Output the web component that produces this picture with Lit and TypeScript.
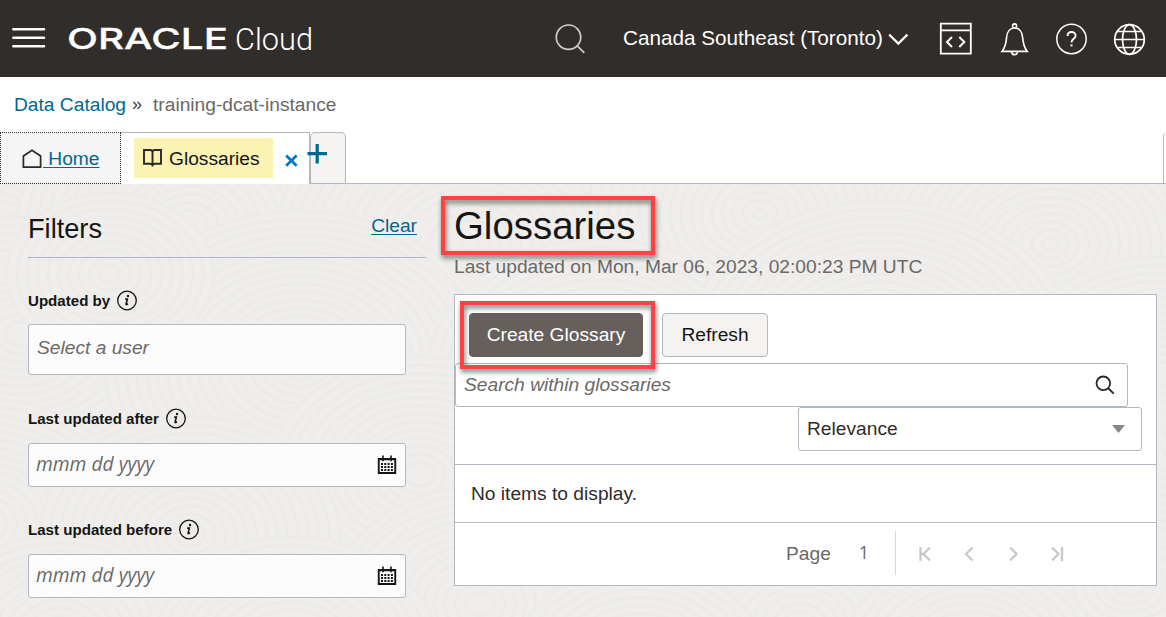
import { LitElement, html, svg, css } from "lit";
import { customElement, property } from "lit/decorators.js";

const SWIRLS: Array<[number, number, number]> = [
  [60, -70, 190], [330, -90, 200], [620, -110, 220], [900, -80, 200], [1180, -90, 210],
  [190, 40, 150], [470, 60, 170], [760, 30, 150], [1050, 60, 160],
  [20, 150, 130], [300, 180, 170], [600, 190, 150], [880, 170, 170], [1160, 190, 130],
  [110, 90, 90], [420, 290, 130], [700, 300, 150], [1010, 310, 160],
  [-20, 340, 140], [190, 350, 130], [480, 420, 130], [800, 440, 140], [1130, 400, 130],
  [60, 450, 110], [290, 470, 130], [640, 480, 110], [970, 470, 110],
];

@customElement("woven-backdrop")
export class WovenBackdrop extends LitElement {
  static styles = css`
    :host { display: block; overflow: hidden; min-width: 0; min-height: 0; }
    svg { display: block; }
  `;
  render() {
    return html`<svg width="1166" height="433" viewBox="0 0 1166 433" fill="none">
      <rect width="1166" height="433" fill="#efeeec"/>
      ${SWIRLS.map(([x, y, r]) => {
        const rings = [];
        for (let k = r; k > 5; k -= 9) rings.push(k);
        return svg`<g><ellipse cx=${x} cy=${y} rx=${r * 1.15} ry=${r * 0.9} fill="#efeeec"/>
          ${rings.map((k) => svg`<ellipse cx=${x} cy=${y} rx=${k * 1.15} ry=${k * 0.9} stroke="#ecebe9" stroke-width="3"/>`)}</g>`;
      })}
    </svg>`;
  }
}

@customElement("filter-field")
export class FilterField extends LitElement {
  @property() label = "";
  @property() placeholder = "";
  @property({ type: Boolean }) date = false;

  static styles = css`
    :host { display: block; }
    .label { display: flex; align-items: center; height: 21px; gap: 7px; font-size: 15.1px; font-weight: 700; color: #161513; }
    svg { display: block; flex: none; }
    .box { box-sizing: border-box; display: flex; justify-content: space-between; width: 378px; height: 51px;
      margin-top: 13px; padding: 0 8px; border: 1px solid #b1b8c2; border-radius: 3px; background: #fcfcfc;
      font-size: 19.2px; font-style: italic; color: #6b6966; line-height: 46px; }
    .date { height: 44px; margin-top: 14px; padding: 0 8px 0 7px; align-items: center; }
    .date span { font-family: "Open Sans", "Noto Sans", sans-serif; font-size: 19.3px; line-height: 40px; height: 42px; }
  `;
  render() {
    return html`
      <div class="label"><span>${this.label}</span>
        <svg width="21" height="21" viewBox="0 0 21 21" fill="none" stroke="#161513">
          <circle cx="10" cy="10.5" r="9.3" stroke-width="1.3"/>
          <path d="M8.200 9.100h2.200l-1.300 4.800q-.2 1 .6.700l1.300-.8" stroke-width="1.600"/>
          <circle cx="11" cy="6" r="1.200" fill="#161513" stroke="none"/>
        </svg>
      </div>
      <div class="box ${this.date ? "date" : ""}"><span>${this.placeholder}</span>
        ${this.date
          ? html`<svg width="20" height="20" viewBox="0 0 20 20" fill="#161513">
              <path fill-rule="evenodd" d="M.8 3h18.400v16H.8zM2.700 5.300v11.800h14.600V5.300z"/>
              <path d="M5.200 .6h1.600v5.600H5.200zM13.200 .6h1.600v5.600h-1.600z"/>
              <path d="M4 9h12.500M4 12h12.500M4 15h12.500" stroke="#161513" stroke-width="1.800" stroke-dasharray="2 1.300"/>
            </svg>`
          : ""}
      </div>`;
  }
}

@customElement("app-root")
export class AppRoot extends LitElement {
  static styles = css`
    :host { display: block; position: relative; width: 1166px; height: 617px; overflow: hidden; background: #fff;
      font-family: "Liberation Sans", Arial, sans-serif; font-size: 19.2px; color: #161513; white-space: nowrap; }
    svg { display: block; flex: none; }
    header { display: flex; align-items: center; box-sizing: border-box; height: 77px; padding: 0 0 1px 12px; background: #312d2a; color: #fff; }
    .logo { margin-left: 22px; }
    .hsearch { margin: 2px 0 0 241px; }
    .region { margin-left: 37px; width: 261px; font-size: 20.7px; }
    .chev { margin: 2px 0 0 4px; }
    .dev { margin: 1px 0 0 30px; }
    .bell { margin: 2px 0 0 27px; }
    .help { margin: 2px 0 0 26px; }
    .globe { margin: 2px 0 0 25px; }
    .crumbs { display: flex; align-items: center; height: 55px; padding-left: 14px; color: #6b6966; }
    .crumbs a { color: #00688c; }
    .sep { margin: 0 11px 0 6px; color: #45413e; font-size: 18px; }
    .tabs { display: flex; height: 52px; }
    .tab { box-sizing: border-box; display: flex; height: 52px; }
    .home { width: 121px; padding: 1px 0 0 21px; align-items: center; background: #f5f5f5; border: 1px dotted #2b2b2b; color: #00688c; }
    .home span { text-decoration: underline; text-underline-offset: 2px; text-decoration-thickness: 1px; white-space: pre; padding-left: 1px; }
    .active { width: 189px; padding: 5px 0 0 13px; border-top: 1px solid #b1b8c2; border-right: 1px solid #b1b8c2; }
    .mark { display: flex; align-items: center; box-sizing: border-box; width: 139px; height: 40px; padding: 1px 0 0 9px; gap: 7px; background: #faf3b4; color: #161513; }
    .mark svg { margin-top: -2px; }
    .close { margin: 16px 0 0 12px; }
    .add { width: 36px; background: #f4f3f2; border: 1px solid #b1b8c2; border-radius: 5px 5px 0 0; }
    .add svg { margin: 10px 0 0 -5px; }
    .rest { flex: 1; display: flex; justify-content: flex-end; border-bottom: 1px solid #b1b8c2; }
    .edge { width: 2px; margin-top: 1px; border-left: 1px solid #b1b8c2; border-radius: 4px 0 0 0; }
    .stage { display: grid; grid-template: 433px / 1166px; }
    .stage > * { grid-area: 1 / 1; }
    .content { display: grid; grid-template-columns: 398px 703px; column-gap: 28px; padding-left: 28px; position: relative; align-content: start; }
    .fhead { display: flex; justify-content: space-between; box-sizing: border-box; height: 74px; padding-right: 9px; border-bottom: 1px solid #b1b8c2; }
    .fhead h2 { margin: 0; font-size: 27.2px; font-weight: 400; line-height: 89px; }
    .fhead a { color: #00688c; text-decoration: underline; text-underline-offset: 2px; text-decoration-thickness: 1px; line-height: 83px; }
    .f1 { margin-top: 32px; }
    .f2 { margin-top: 33px; }
    .f3 { margin-top: 32px; }
    h1 { margin: 0; font-size: 38.4px; font-weight: 400; line-height: 84px; height: 69px; }
    .updated { height: 41px; line-height: 27px; color: #6b6966; }
    .panel { box-sizing: border-box; width: 703px; height: 292px; border: 1px solid #b1b8c2; background: #fff; }
    .buttons { display: flex; gap: 19px; padding: 18px 0 6px 14px; }
    .btn { box-sizing: border-box; height: 44px; border-radius: 4px; text-align: center; line-height: 42px; }
    .primary { width: 174px; background: #665f5b; color: #fff; border: 1px solid #665f5b; }
    .secondary { width: 106px; background: #f4f3f2; border: 1px solid #b1b8c2; }
    .search, .select { box-sizing: border-box; display: flex; justify-content: space-between; align-items: center; height: 44px; border: 1px solid #b1b8c2; border-radius: 3px; background: #fff; }
    .search { width: 673px; padding: 0 12px 1px 8px; font-style: italic; color: #6b6966; }
    .select { width: 344px; margin-left: 343px; padding: 0 16px 0 8px; color: #2f2c2a; }
    .empty { box-sizing: border-box; height: 59px; margin-top: 13px; padding-left: 16px; border: solid #b1b8c2; border-width: 1px 0; line-height: 58px; color: #2f2c2a; }
    .pager { display: flex; align-items: center; box-sizing: border-box; height: 62px; padding: 0 0 2px 331px; color: #6b6966; }
    .pager span:first-child { padding-top: 1px; }
    .num { width: 36px; margin: -2px 0 0 28px; font-family: "Open Sans", sans-serif; font-size: 18px; }
    .rule { width: 1px; height: 44px; margin: -1px 22px 0 0; background: #d8d8d8; }
    .pg { margin: 1px 30px 0 0; }
    .callout { position: absolute; box-sizing: border-box; border: 4px solid #fd4343; filter: drop-shadow(1px 3px 2.5px rgba(0, 0, 0, 0.55)); }
    .c1 { left: 441px; top: 196px; width: 214px; height: 59px; }
    .c2 { left: 460px; top: 301px; width: 195px; height: 68px; }
  `;

  private pageIcon(d: string) {
    return html`<svg class="pg" width="14" height="16" viewBox="0 0 14 16" fill="none" stroke="#c8c8c8" stroke-width="2.3"><path d=${d}/></svg>`;
  }

  render() {
    return html`
      <header>
        <svg width="34" height="20" viewBox="0 0 34 20" stroke="#fff" stroke-width="2.400" stroke-linecap="round"><path d="M1.300 1.300h30.800M1.300 9.800h30.800M1.300 18.300h30.800"/></svg>
        <svg class="logo" width="246" height="40" viewBox="0 0 246 40" fill="#fff">
          <text x="-1" y="31" font-family="Inter, sans-serif" font-weight="500" font-size="29" textLength="161" lengthAdjust="spacingAndGlyphs" stroke="#fff" stroke-width=".3">ORACLE</text>
          <text x="167" y="31.500" font-family="Roboto, sans-serif" font-weight="300" font-size="31.500" textLength="78" lengthAdjust="spacingAndGlyphs">Cloud</text>
        </svg>
        <svg class="hsearch" width="31" height="32" viewBox="0 0 31 32" fill="none" stroke="#d0cecb" stroke-width="1.700"><circle cx="13.500" cy="14.200" r="12.200"/><path d="M22.300 22.800l7 7"/></svg>
        <span class="region">Canada Southeast (Toronto)</span>
        <svg class="chev" width="21" height="12" viewBox="0 0 21 12" fill="none" stroke="#fff" stroke-width="2.200"><path d="M1.200 1.600l9.100 9 9.100-9"/></svg>
        <svg class="dev" width="34" height="34" viewBox="0 0 34 34" fill="none" stroke="#fff" stroke-width="1.800"><path d="M1.800 1.600h30v30h-30zM1.800 8.400h30"/><path d="M13 15l-5 5 5 5M20.300 15l5 5-5 5" stroke-width="2"/></svg>
        <svg class="bell" width="30" height="34" viewBox="0 0 30 34" fill="none" stroke="#fff" stroke-width="1.600"><path d="M2 29.400c3.800-4.600 4.200-9 4.600-14C7 9.300 10.300 6 14.600 6s7.600 3.300 8 9.400c.4 5 .8 9.400 4.600 14z"/><circle cx="14.600" cy="3.900" r="2"/><path d="M11.600 29.600c.4 4.200 5.600 4.200 6 0"/></svg>
        <svg class="help" width="32" height="34" viewBox="0 0 32 34" fill="none" stroke="#fff" stroke-width="1.500"><circle cx="15.500" cy="17" r="14.700"/><path d="M11.600 14c0-5.400 8-5 8-.4 0 3.400-4.100 3.100-4.100 6.900" stroke-width="1.900"/><path d="M14.500 22.400h2v2h-2z" fill="#fff" stroke="none"/></svg>
        <svg class="globe" width="34" height="34" viewBox="0 0 34 34" fill="none" stroke="#fff" stroke-width="1.700"><circle cx="16.500" cy="17.500" r="14.800"/><ellipse cx="16.500" cy="17.500" rx="7" ry="14.800"/><path d="M1.700 17.500h29.600M4 9.500h25M4 25.500h25"/></svg>
      </header>
      <nav class="crumbs"><a>Data Catalog</a><span class="sep">»</span><span>training-dcat-instance</span></nav>
      <div class="tabs">
        <div class="tab home">
          <svg width="20" height="20" viewBox="0 0 20 20" fill="none" stroke="#2b2724" stroke-width="1.700"><path d="M1.400 18.200V7L10 1.300 18.600 7v11.200z"/></svg>
          <span> Home</span>
        </div>
        <div class="tab active">
          <div class="mark">
            <svg width="19" height="19" viewBox="0 0 19 19" fill="none" stroke="#2b2724" stroke-width="1.900"><path d="M1 2h6q2.500 0 2.500 2.200Q9.500 2 12 2h6v13.800h-6q-2.500 0-2.500 1.600Q9.500 15.800 7 15.800H1zM9.500 4v14.500"/></svg>
            <span>Glossaries</span>
          </div>
          <svg class="close" width="13" height="13" viewBox="0 0 13 13" stroke="#0079c7" stroke-width="2.800"><path d="M1.200 1.500l10.400 10.200M11.600 1.500L1.200 11.700"/></svg>
        </div>
        <div class="tab add"><svg width="22" height="22" viewBox="0 0 22 22" stroke="#00688c" stroke-width="3.200"><path d="M1.500 10.700h19.500M11.200 1v19.500"/></svg></div>
        <div class="rest"><div class="edge"></div></div>
      </div>
      <div class="stage">
        <woven-backdrop></woven-backdrop>
        <div class="content">
          <aside>
            <div class="fhead"><h2>Filters</h2><a>Clear</a></div>
            <filter-field class="f1" label="Updated by" placeholder="Select a user"></filter-field>
            <filter-field class="f2" label="Last updated after" placeholder="mmm dd yyyy" date></filter-field>
            <filter-field class="f3" label="Last updated before" placeholder="mmm dd yyyy" date></filter-field>
          </aside>
          <main>
            <h1>Glossaries</h1>
            <div class="updated">Last updated on Mon, Mar 06, 2023, 02:00:23 PM UTC</div>
            <section class="panel">
              <div class="buttons"><div class="btn primary">Create Glossary</div><div class="btn secondary">Refresh</div></div>
              <div class="search"><span>Search within glossaries</span>
                <svg width="20" height="20" viewBox="0 0 20 20" fill="none" stroke="#2b2724" stroke-width="1.800"><circle cx="8.300" cy="8.300" r="6.800"/><path d="M13 13l5.700 5.700"/></svg>
              </div>
              <div class="select"><span>Relevance</span><svg width="13" height="8" viewBox="0 0 13 8" fill="#85878a"><path d="M0 0h13L6.500 8z"/></svg></div>
              <div class="empty">No items to display.</div>
              <div class="pager"><span>Page</span><span class="num">1</span><span class="rule"></span>
                ${this.pageIcon("M2.500 1v14M12 1.500L5.500 8l6.500 6.500M4.500 7v2")}
                ${this.pageIcon("M10.500 1.500L4 8l6.500 6.500")}
                ${this.pageIcon("M4 1.500L10.500 8 4 14.500")}
                ${this.pageIcon("M12 1v14M2 1.500L8.500 8 2 14.500")}
              </div>
            </section>
          </main>
        </div>
      </div>
      <div class="callout c1"></div>
      <div class="callout c2"></div>
    `;
  }
}
